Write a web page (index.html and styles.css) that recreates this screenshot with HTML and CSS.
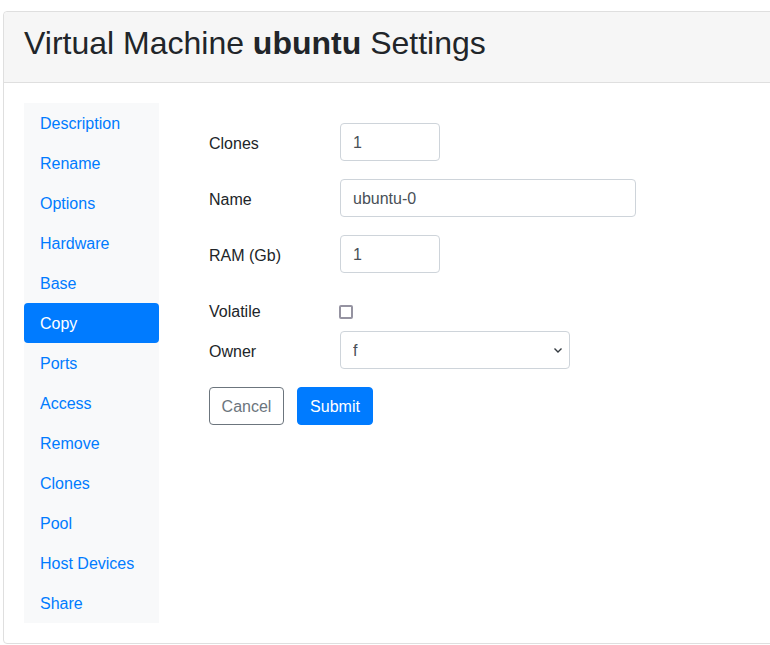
FILE: index.html
```html
<!DOCTYPE html>
<html lang="en">
<head>
<meta charset="utf-8">
<title>Virtual Machine ubuntu Settings</title>
<link rel="stylesheet" href="styles.css">
</head>
<body>
<div class="page">
  <div class="card">
    <div class="card-header">
      <h2 class="title">Virtual Machine <b>ubuntu</b> Settings</h2>
    </div>
    <div class="card-body">
      <nav class="side-nav">
        <a class="nav-link" href="#">Description</a>
        <a class="nav-link" href="#">Rename</a>
        <a class="nav-link" href="#">Options</a>
        <a class="nav-link" href="#">Hardware</a>
        <a class="nav-link" href="#">Base</a>
        <a class="nav-link active" href="#">Copy</a>
        <a class="nav-link" href="#">Ports</a>
        <a class="nav-link" href="#">Access</a>
        <a class="nav-link" href="#">Remove</a>
        <a class="nav-link" href="#">Clones</a>
        <a class="nav-link" href="#">Pool</a>
        <a class="nav-link" href="#">Host Devices</a>
        <a class="nav-link" href="#">Share</a>
      </nav>
      <form class="form">
        <div class="row row-input">
          <label class="label">Clones</label>
          <input class="control control-short" type="text" value="1">
        </div>
        <div class="row row-input">
          <label class="label">Name</label>
          <input class="control control-long" type="text" value="ubuntu-0">
        </div>
        <div class="row row-input">
          <label class="label">RAM (Gb)</label>
          <input class="control control-short" type="text" value="1">
        </div>
        <div class="row row-check">
          <label class="label label-check">Volatile</label>
          <span class="checkbox"></span>
        </div>
        <div class="row row-select">
          <label class="label">Owner</label>
          <div class="select-wrap">
            <select class="control control-select"><option>f</option></select>
            <svg class="chevron" width="10" height="8" viewBox="0 0 10 8"><path d="M1.5 2.5 L5 6 L8.5 2.5" fill="none" stroke="#343a40" stroke-width="1.4"/></svg>
          </div>
        </div>
        <div class="actions">
          <button type="button" class="btn btn-outline">Cancel</button>
          <button type="button" class="btn btn-primary">Submit</button>
        </div>
      </form>
    </div>
  </div>
</div>
</body>
</html>
```

FILE: styles.css
```css
html, body {
  margin: 0;
  padding: 0;
  overflow: hidden;
  background: #fff;
}
body {
  font-family: "Liberation Sans", Arial, sans-serif;
  font-size: 16px;
  line-height: 24px;
  color: #212529;
}
.page {
  padding: 11px 0 0 3px;
  width: 820px;
}
.card {
  border: 1px solid #dfdfdf;
  border-radius: 4px;
  background: #fff;
}
.card-header {
  background: #f6f6f6;
  border-bottom: 1px solid #dfdfdf;
  padding: 12px 20px;
  border-radius: 4px 4px 0 0;
}
.title {
  margin: 0 0 8px 0;
  font-size: 32px;
  line-height: 38.4px;
  font-weight: 400;
  color: #212529;
}
.title b {
  font-weight: 700;
}
.card-body {
  padding: 20px;
  display: flex;
  align-items: flex-start;
}
.side-nav {
  width: 135px;
  background: #f8f9fa;
  display: flex;
  flex-direction: column;
}
.nav-link {
  display: block;
  padding: 9px 16px 7px;
  color: #007bff;
  text-decoration: none;
  border-radius: 4px;
  white-space: nowrap;
}
.nav-link.active {
  background: #007bff;
  color: #fff;
}
.form {
  margin-left: 50px;
  padding-top: 20px;
}
.row {
  display: flex;
  align-items: center;
}
.label {
  width: 131px;
  flex: none;
  padding-top: 4px;
}
.label-check {
  padding-top: 2px;
}
.row-input {
  height: 38px;
  margin-bottom: 18px;
}
.row-input:nth-child(3) {
  margin-bottom: 26px;
}
.row-check {
  height: 24px;
  margin-bottom: 8px;
}
.row-select {
  height: 38px;
  margin-bottom: 18px;
}
.control {
  box-sizing: border-box;
  height: 38px;
  border: 1px solid #ced4da;
  border-radius: 4px;
  padding: 7px 12px 5px;
  font-family: inherit;
  font-size: 16px;
  line-height: 24px;
  color: #495057;
  background: #fff;
  margin: 0;
}
.control-short { width: 100px; }
.control-long { width: 296px; }
.select-wrap {
  position: relative;
  width: 230px;
}
.control-select {
  width: 230px;
  appearance: none;
  -webkit-appearance: none;
  padding-right: 28px;
}
.chevron {
  position: absolute;
  right: 7px;
  top: 15px;
}
.checkbox {
  box-sizing: border-box;
  width: 14px;
  height: 14px;
  border: 2px solid #9593a1;
  border-radius: 2px;
  margin-left: -1px;
  margin-top: 1px;
  background: #fff;
}
.actions {
  display: flex;
  gap: 13px;
}
.btn {
  box-sizing: border-box;
  height: 38px;
  padding: 7px 12px 5px;
  font-family: inherit;
  font-size: 16px;
  line-height: 24px;
  border-radius: 4px;
  border: 1px solid transparent;
  cursor: pointer;
}
.btn-outline {
  background: #fff;
  border-color: #6c757d;
  color: #6c757d;
  width: 75px;
  padding-left: 0;
  padding-right: 0;
}
.btn-primary {
  background: #007bff;
  border-color: #007bff;
  color: #fff;
  width: 76px;
  padding-left: 0;
  padding-right: 0;
}
```
